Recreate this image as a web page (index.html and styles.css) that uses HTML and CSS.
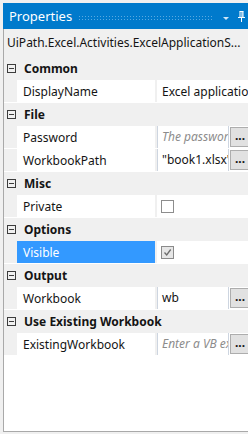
FILE: index.html
```html
<!DOCTYPE html>
<html lang="en">
<head>
    <meta charset="UTF-8">
    <title>Properties</title>
    <link rel="stylesheet" href="styles.css">
</head>
<body>
    <div class="panel">
        <div class="titlebar">
            <span class="title">Properties</span>
            <span class="grip"></span>
            <span class="drop-arrow"></span>
            <svg class="pin" width="7" height="11" viewBox="0 0 7 11">
                <path d="M1.5 0.5h4M2 0.5v6M5 0.5v6M4 0.5v6M0 6.5h7M3.5 6.5v4.5" stroke="#fff" stroke-width="1" fill="none"/>
            </svg>
        </div>
        <div class="content">
            <div class="selected-item">UiPath.Excel.Activities.ExcelApplicationS...</div>
            <div class="grid">
                <div class="category"><span class="expander"></span>Common</div>
                <div class="prop">
                    <div class="prop-name">DisplayName</div>
                    <div class="prop-value"><span class="plain">Excel application scope</span></div>
                </div>

                <div class="category"><span class="expander"></span>File</div>
                <div class="prop">
                    <div class="prop-name">Password</div>
                    <div class="prop-value">
                        <div class="textbox placeholder">The password of the workbook</div>
                        <div class="dots-btn">...</div>
                    </div>
                </div>
                <div class="prop">
                    <div class="prop-name">WorkbookPath</div>
                    <div class="prop-value">
                        <div class="textbox">"book1.xlsx"</div>
                        <div class="dots-btn">...</div>
                    </div>
                </div>

                <div class="category"><span class="expander"></span>Misc</div>
                <div class="prop">
                    <div class="prop-name">Private</div>
                    <div class="prop-value"><span class="checkbox"></span></div>
                </div>

                <div class="category"><span class="expander"></span>Options</div>
                <div class="prop">
                    <div class="prop-name selected">Visible</div>
                    <div class="prop-value">
                        <span class="checkbox checked">
                            <svg width="11" height="11" viewBox="0 0 11 11"><path d="M2.5 5.5l2.2 2.5 4-5.5" stroke="#6d6d6d" stroke-width="1.3" fill="none"/></svg>
                        </span>
                    </div>
                </div>

                <div class="category"><span class="expander"></span>Output</div>
                <div class="prop">
                    <div class="prop-name">Workbook</div>
                    <div class="prop-value">
                        <div class="textbox">wb</div>
                        <div class="dots-btn">...</div>
                    </div>
                </div>

                <div class="category"><span class="expander"></span>Use Existing Workbook</div>
                <div class="prop">
                    <div class="prop-name">ExistingWorkbook</div>
                    <div class="prop-value">
                        <div class="textbox placeholder">Enter a VB expression</div>
                        <div class="dots-btn">...</div>
                    </div>
                </div>
            </div>
        </div>
    </div>
</body>
</html>
```

FILE: styles.css
```css
body {
    margin: 0;
    background: #f0f0f0;
    font-family: "Noto Sans", "Noto Sans CJK SC", sans-serif;
    font-size: 12px;
    color: #141414;
}

.panel {
    width: 248px;
    height: 434px;
    padding-top: 3px;
    box-sizing: border-box;
    display: flex;
    flex-direction: column;
    overflow: hidden;
}

.titlebar {
    height: 26px;
    margin-left: 3px;
    background: #007acc;
    display: flex;
    align-items: center;
    color: #fff;
}

.title {
    font-size: 13px;
    padding-left: 6px;
}

.grip {
    width: 135px;
    height: 5px;
    margin-left: 6px;
    margin-top: 2px;
    background-image: radial-gradient(#5aa9e0 0.7px, transparent 0.8px);
    background-size: 3px 3px;
}

.drop-arrow {
    margin-left: 10px;
    margin-top: 4px;
    width: 0;
    height: 0;
    border-left: 3px solid transparent;
    border-right: 3px solid transparent;
    border-top: 3px solid #cfe6f7;
}

.pin {
    margin-left: 9px;
    margin-top: 1px;
}

.content {
    flex: 1;
    margin-left: 3px;
    margin-bottom: 2px;
    border-left: 1px solid #a9a9a9;
    border-bottom: 1px solid #a9a9a9;
    display: flex;
    flex-direction: column;
    background: #fff;
}

.selected-item {
    height: 28px;
    line-height: 27px;
    padding-left: 3px;
    background: #f0f0f0;
    white-space: nowrap;
    overflow: hidden;
}

.grid {
    display: flex;
    flex-direction: column;
}

.category {
    height: 23px;
    background: #f0f0f0;
    display: flex;
    align-items: center;
    font-weight: bold;
    padding-left: 3px;
}

.expander {
    width: 7px;
    height: 7px;
    border: 1px solid #3c3c3c;
    margin-right: 8px;
    position: relative;
    box-sizing: content-box;
}

.expander::after {
    content: "";
    position: absolute;
    left: 1px;
    top: 3px;
    width: 5px;
    height: 1px;
    background: #3c3c3c;
}

.prop {
    height: 22px;
    margin-bottom: 1px;
    padding-left: 13px;
    background: #f0f0f0;
    display: flex;
}

.prop-name {
    width: 132px;
    padding-left: 6px;
    margin-right: 2px;
    background: #fff;
    display: flex;
    align-items: center;
    white-space: nowrap;
}

.prop-name.selected {
    background: #3399ff;
    color: #fff;
}

.prop-value {
    flex: 1;
    background: #fff;
    display: flex;
    align-items: center;
    overflow: hidden;
    white-space: nowrap;
}

.plain {
    padding-left: 5px;
}

.textbox {
    width: 66px;
    height: 22px;
    border: 1px solid #cdd5e0;
    padding-left: 4px;
    line-height: 21px;
    overflow: hidden;
    white-space: nowrap;
    flex-shrink: 0;
}

.textbox.placeholder {
    color: #8c8c8c;
    font-style: italic;
}

.dots-btn {
    width: 22px;
    height: 20px;
    margin-left: 1px;
    border: 1px solid #adadad;
    background: #e1e1e1;
    font-weight: bold;
    line-height: 16px;
    padding-left: 4px;
    box-sizing: border-box;
    flex-shrink: 0;
}

.checkbox {
    width: 11px;
    height: 11px;
    margin-left: 4px;
    border: 1px solid #8d8d8d;
    background: #fff;
    display: flex;
}

.checkbox.checked {
    background: #e6e6e6;
    border-color: #8a8a8a;
}
```
